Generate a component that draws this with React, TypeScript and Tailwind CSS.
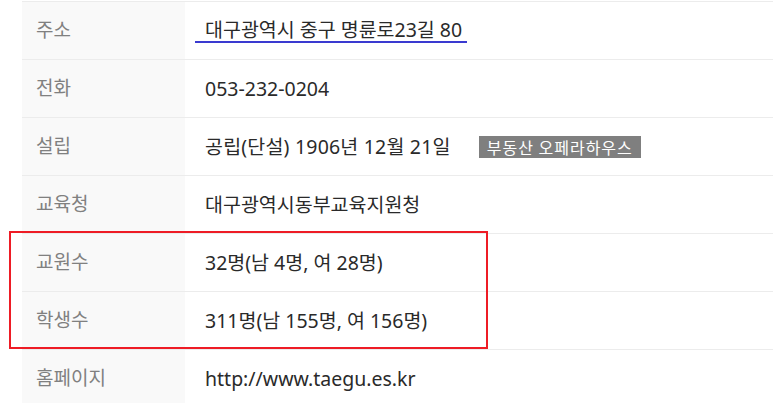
import React from "react";

const font = { fontFamily: '"Noto Sans", "Noto Sans CJK KR", sans-serif' };

type Row = { label: string; value: React.ReactNode };

const rows: Row[] = [
  {
    label: "주소",
    value: (
      <span className="inline-block border-b-2 border-[#3a3ad0] pl-[10px] pr-[5px] ml-[-10px] leading-[22px]">
        대구광역시 중구 명륜로23길 80
      </span>
    ),
  },
  { label: "전화", value: "053-232-0204" },
  {
    label: "설립",
    value: (
      <span className="flex items-center">
        <span className="tracking-[0.2px]">공립(단설) 1906년 12월 21일</span>
        <span className="ml-[28px] bg-[#7f7f7f] text-white text-[16px] leading-[22px] px-[8px] tracking-[1px]" style={{ fontFamily: '"Noto Sans CJK KR", sans-serif' }}>
          부동산 오페라하우스
        </span>
      </span>
    ),
  },
  { label: "교육청", value: "대구광역시동부교육지원청" },
  { label: "교원수", value: "32명(남 4명, 여 28명)" },
  { label: "학생수", value: "311명(남 155명, 여 156명)" },
  { label: "홈페이지", value: "http://www.taegu.es.kr" },
];

export default function App() {
  return (
    <div className="w-[773px] h-[403px] overflow-hidden bg-white relative" style={font}>
      <div className="pl-[22px] pt-[1px]">
        <div className="border-t border-[#ececec]">
          {rows.map((r, i) => (
            <div key={i} className="flex h-[58px] border-b border-[#ececec]">
              <div className="w-[163px] shrink-0 bg-[#f9f9f9] flex items-center pl-[14px] text-[19px] text-[#808080]">
                {r.label}
              </div>
              <div className="flex items-center pl-[20px] text-[19.5px] text-[#2a2a2a]">
                {r.value}
              </div>
            </div>
          ))}
        </div>
      </div>
      <div className="absolute left-[9px] top-[231px] w-[479px] h-[118px] border-2 border-[#ee1c25]" />
    </div>
  );
}
